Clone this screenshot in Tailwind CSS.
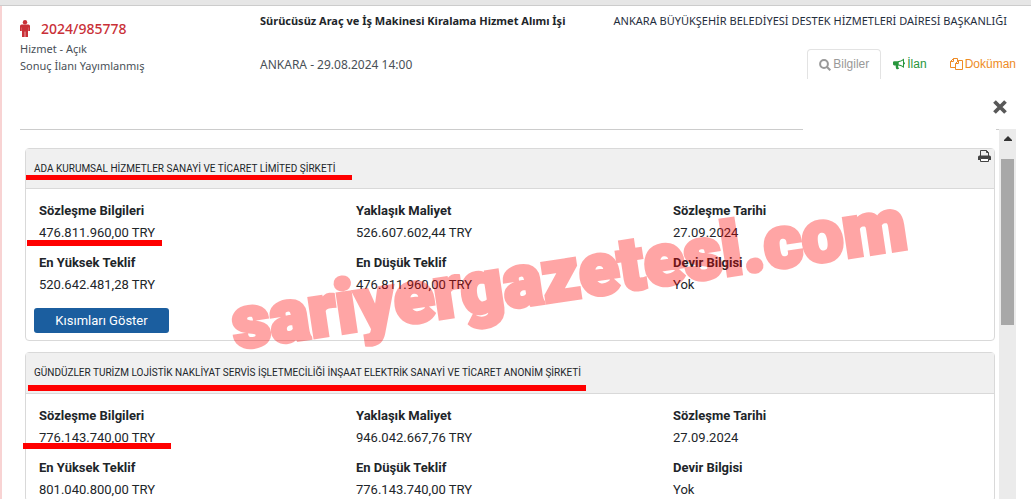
<!DOCTYPE html>
<html lang="tr">
<head>
    <meta charset="UTF-8">
    <meta name="viewport" content="width=device-width, initial-scale=1.0">
    <title>2024/985778 - Sürücüsüz Araç ve İş Makinesi Kiralama Hizmet Alımı İşi</title>
    <script src="https://cdn.jsdelivr.net/npm/@tailwindcss/browser@4"></script>
</head>
<body class="bg-white h-screen overflow-hidden relative flex flex-col font-['Roboto',sans-serif] text-[13px] text-[#212529]">

<div class="h-[6px] shrink-0 bg-[#e6e6e6] border-b border-[#cccccc]"></div>

<main class="flex-1 min-h-0 flex flex-col border-l-2 border-[#f8d3d3]">
    <header class="flex pl-[18px] pr-[15px] h-[93px] shrink-0 font-['Noto_Sans',sans-serif] text-[11px] text-[#495057]">
        <div class="w-60 shrink-0 pt-3">
            <h1 class="flex items-center gap-[11px] h-5 text-[14px] font-medium text-[#c93037]">
                <svg class="w-[10px] h-[17px]" viewBox="0 0 10 17" fill="currentColor">
                    <circle cx="5" cy="2.2" r="2.2"/>
                    <path d="M1.6 4.500h6.8Q10 4.500 10 6.100V11H8.200V7.500H8V17H5.300v-5.500h-.6V17H2V7.500h-.2V11H0V6.100Q0 4.500 1.600 4.500z"/>
                </svg>
                2024/985778
            </h1>
            <p class="leading-[17px] mt-[2px]">Hizmet - Açık</p>
            <p class="leading-[17px]">Sonuç İlanı Yayımlanmış</p>
        </div>
        <div class="flex-1 pt-[6px] whitespace-nowrap">
            <h2 class="leading-[17px] font-bold text-[#212529]">Sürücüsüz Araç ve İş Makinesi Kiralama Hizmet Alımı İşi</h2>
            <p class="leading-[17px] mt-[27px] text-[12px]">ANKARA - 29.08.2024 14:00</p>
        </div>
        <div class="pt-[6px] flex flex-col items-end whitespace-nowrap">
            <p class="leading-[17px] pr-[9px] text-[#1f2d3d]">ANKARA BÜYÜKŞEHİR BELEDİYESİ DESTEK HİZMETLERİ DAİRESİ BAŞKANLIĞI</p>
            <nav class="flex mt-5 font-['Liberation_Sans',sans-serif] text-[12px] leading-[29px]">
                <a href="#bilgiler" class="flex items-center gap-[2px] px-[11px] border border-b-0 border-[#e3e3e3] rounded-t-sm text-[#999999]">
                    <svg class="w-3 h-3" viewBox="0 0 12 12" fill="none" stroke="currentColor" stroke-width="2"><circle cx="5" cy="5" r="3.900"/><path d="M7.800 7.800 11.300 11.300"/></svg>
                    Bilgiler
                </a>
                <a href="#ilan" class="flex items-center gap-[2px] px-3 text-[#28963c]">
                    <svg class="w-3 h-3" viewBox="0 0 12 12" fill="currentColor"><path fill-rule="evenodd" d="M11 .5v3.700q1 .2 1 1.100t-1 1.100V10Q8.500 7.700 5.300 7.400q-.6.6 0 1.300-.3.700.9 1.800-1.300 1.200-2.900.5Q2.500 9.200 2.700 7.400H1.200Q0 7.400 0 6.300v-2q0-1.100 1.200-1.100h3.300Q8.300 3.100 11 .5zM10 2.600Q8 4 5.700 4.200v2.300Q8 6.700 10 8z"/></svg>
                    İlan
                </a>
                <a href="#dokuman" class="flex items-center gap-[2px] pl-[11px] text-[#ee8b25]">
                    <svg class="w-[13px] h-3" viewBox="0 0 13 12" fill="none" stroke="currentColor"><path d="M5 9.500H.5V3.500l3-3H7.500V3M3.500.5v3h-3M5.500 5.500l3-3h4v9h-7zM8.500 2.500v3h-3"/></svg>
                    Doküman
                </a>
            </nav>
        </div>
    </header>

    <div class="flex justify-end items-start h-[30px] shrink-0 pr-6">
        <button type="button" aria-label="Kapat" class="text-[#585858] mt-px">
            <svg class="w-[14px] h-[14px]" viewBox="0 0 14 14" fill="none" stroke="currentColor" stroke-width="3.800"><path d="M1.500 1.500l11 11M12.500 1.500l-11 11"/></svg>
        </button>
    </div>

    <div class="flex flex-1 min-h-0 pl-[18px] pr-[15px]">
        <div class="flex-1 overflow-hidden">
            <div class="flex justify-between">
                <div class="h-px w-4/5 bg-[#cccccc]"></div>
                <div class="h-px w-[3px] bg-[#cccccc]"></div>
            </div>
            <div class="pl-[5px] pr-1 pt-[18px] space-y-[11px]">
                <section class="border border-[#d9d9d9] rounded-sm">
                    <div class="relative flex items-center h-10 pl-2 bg-[#f0f0f0] border-b border-[#d9d9d9]">
                        <h3 class="text-[10px] leading-4">ADA KURUMSAL HİZMETLER SANAYİ VE TİCARET LİMİTED ŞİRKETİ</h3>
                        <button type="button" aria-label="Yazdır" class="absolute top-px right-[3px] text-[#444444]">
                            <svg class="w-[13px] h-3" viewBox="0 0 13 12"><path d="M2.500 6V.5h6l2 2V6M8.500.5v2h2" fill="none" stroke="currentColor"/><path d="M1.500 5.500h10Q13 5.500 13 7v3h-2.500V8.500h-8V10H0V7q0-1.500 1.500-1.500z" fill="currentColor"/><path d="M2.500 8.500h8v3h-8z" fill="white" stroke="currentColor"/></svg>
                        </button>
                        <span class="absolute left-0 top-[26px] w-[326px] h-[5px] bg-[#ff0000]"></span>
                    </div>
                    <dl class="grid grid-cols-3 gap-y-2 pl-[13px] pr-1 pt-[11px] leading-[22px]">
                        <div class="relative">
                            <dt class="font-bold">Sözleşme Bilgileri</dt>
                            <dd>476.811.960,00 TRY</dd>
                            <span class="absolute -left-3 top-10 w-[135px] h-[6px] bg-[#ff0000]"></span>
                        </div>
                        <div><dt class="font-bold">Yaklaşık Maliyet</dt><dd>526.607.602,44 TRY</dd></div>
                        <div><dt class="font-bold">Sözleşme Tarihi</dt><dd>27.09.2024</dd></div>
                        <div><dt class="font-bold">En Yüksek Teklif</dt><dd>520.642.481,28 TRY</dd></div>
                        <div><dt class="font-bold">En Düşük Teklif</dt><dd>476.811.960,00 TRY</dd></div>
                        <div><dt class="font-bold">Devir Bilgisi</dt><dd>Yok</dd></div>
                    </dl>
                    <button type="button" class="block ml-2 mt-3 mb-[7px] w-[135px] h-[25px] rounded-[3px] bg-[#1b5e9f] text-white">Kısımları Göster</button>
                </section>

                <section class="border border-[#d9d9d9] rounded-sm">
                    <div class="relative flex items-center h-[41px] pl-2 bg-[#f0f0f0] border-b border-[#d9d9d9]">
                        <h3 class="text-[10px] leading-4">GÜNDÜZLER TURİZM LOJİSTİK NAKLİYAT SERVİS İŞLETMECİLİĞİ İNŞAAT ELEKTRİK SANAYİ VE TİCARET ANONİM ŞİRKETİ</h3>
                        <span class="absolute left-[2px] top-8 w-[558px] h-[6px] bg-[#ff0000]"></span>
                    </div>
                    <dl class="grid grid-cols-3 gap-y-2 pl-[13px] pr-1 pt-[11px] leading-[22px]">
                        <div class="relative">
                            <dt class="font-bold">Sözleşme Bilgileri</dt>
                            <dd>776.143.740,00 TRY</dd>
                            <span class="absolute -left-4 top-[38px] w-[148px] h-[6px] bg-[#ff0000]"></span>
                        </div>
                        <div><dt class="font-bold">Yaklaşık Maliyet</dt><dd>946.042.667,76 TRY</dd></div>
                        <div><dt class="font-bold">Sözleşme Tarihi</dt><dd>27.09.2024</dd></div>
                        <div><dt class="font-bold">En Yüksek Teklif</dt><dd>801.040.800,00 TRY</dd></div>
                        <div><dt class="font-bold">En Düşük Teklif</dt><dd>776.143.740,00 TRY</dd></div>
                        <div><dt class="font-bold">Devir Bilgisi</dt><dd>Yok</dd></div>
                    </dl>
                </section>
            </div>
        </div>

        <!-- scrollbar -->
        <div class="w-[17px] shrink-0 bg-[#ebebeb] flex flex-col items-center">
            <svg class="w-2 h-[5px] mt-[7px]" viewBox="0 0 8 5" fill="#333333"><path d="M4 0l4 4v1H0V4z"/></svg>
            <div class="w-[13px] h-[166px] mt-[18px] bg-[#a8a8a8]"></div>
        </div>
    </div>
</main>

<!-- watermark -->
<div class="absolute left-[228px] top-[232px] -rotate-[8.5deg] whitespace-nowrap text-[74px] leading-[84px] font-black text-[#ff0000] [-webkit-text-stroke:4px_#ff0000] opacity-35 pointer-events-none">sariyergazetesl.com</div>

</body>
</html>
